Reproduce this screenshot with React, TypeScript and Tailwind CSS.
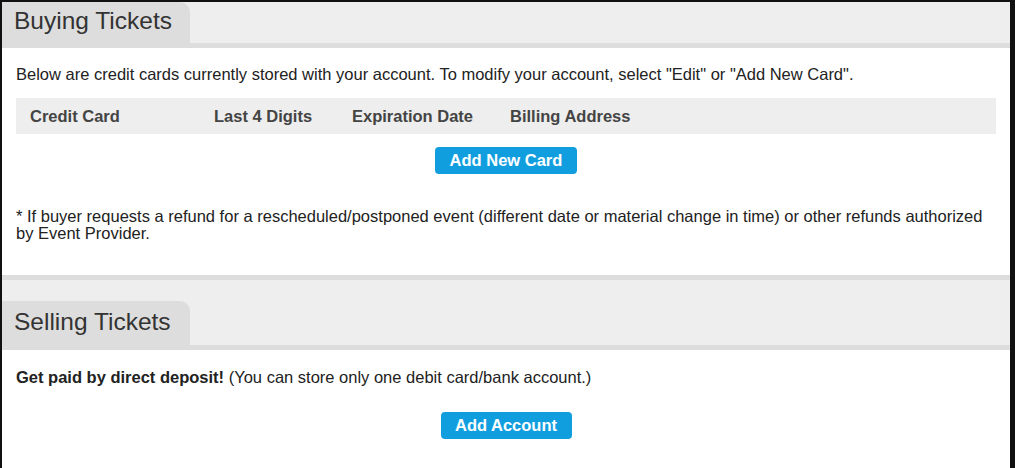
import React from "react";

const font = { fontFamily: '"Liberation Sans", Arial, Helvetica, sans-serif' };

function Header({ title, tabH }: { title: string; tabH: string }) {
  return (
    <div className="flex flex-col bg-[#eeeeee]">
      <div className="flex items-end">
        <div
          className={`flex ${tabH} w-[188px] items-center rounded-tr-[10px] bg-[#dddddd] pb-[2px] pl-[12px] text-[24.5px] text-[#333333]`}
        >
          {title}
        </div>
      </div>
      <div className="h-[5px] bg-[#dddddd]" />
    </div>
  );
}

export default function App() {
  return (
    <div className="h-[468px] w-[1015px] overflow-hidden bg-[#111111] pl-[2px] pr-[5px] pt-[2px]" style={font}>
      <div className="flex h-full flex-col bg-[#eeeeee]">
        <Header title="Buying Tickets" tabH="h-[41px]" />
        <div className="h-[227px] bg-white px-[14px] pt-[16px] text-[16.5px] text-[#222222]">
          <p className="leading-[20px]">
            Below are credit cards currently stored with your account. To modify your account, select "Edit" or "Add New Card".
          </p>
          <div className="mt-[14px] flex h-[36px] items-center bg-[#eeeeee] text-[16.5px] font-bold text-[#444444]">
            <span className="w-[198px] pl-[14px]">Credit Card</span>
            <span className="w-[138px]">Last 4 Digits</span>
            <span className="w-[158px]">Expiration Date</span>
            <span>Billing Address</span>
          </div>
          <div className="mt-[13px] flex justify-center">
            <button className="h-[27px] w-[142px] rounded-[4px] bg-[#119edf] text-[16.5px] font-bold text-white">
              Add New Card
            </button>
          </div>
          <p className="mt-[34px] leading-[17px]">
            * If buyer requests a refund for a rescheduled/postponed event (different date or material change in time) or other refunds authorized by Event Provider.
          </p>
        </div>
        <div className="h-[5px] bg-[#dddddd]" />
        <div className="h-[21px]" />
        <Header title="Selling Tickets" tabH="h-[44px]" />
        <div className="flex-1 bg-white px-[14px] pt-[17px] text-[16.5px] text-[#222222]">
          <p className="leading-[20px]">
            <b>Get paid by direct deposit!</b> (You can store only one debit card/bank account.)
          </p>
          <div className="mt-[25px] flex justify-center">
            <button className="h-[27px] w-[131px] rounded-[4px] bg-[#119edf] text-[16.5px] font-bold text-white">
              Add Account
            </button>
          </div>
        </div>
      </div>
    </div>
  );
}
